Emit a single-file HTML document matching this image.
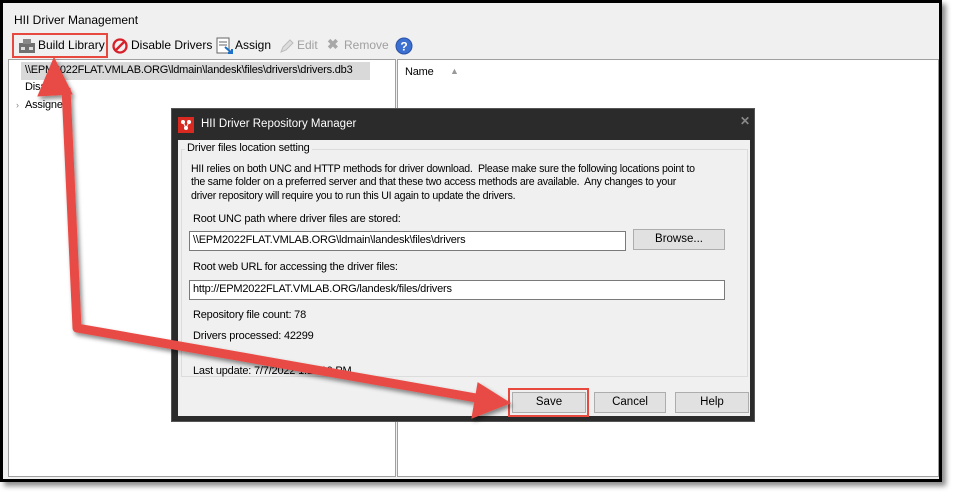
<!DOCTYPE html>
<html><head><style>
*{margin:0;padding:0;box-sizing:border-box}
body{width:955px;height:494px;background:#fff;position:relative;overflow:hidden;font-family:"Liberation Sans",sans-serif;font-size:12px;color:#000}
.abs{position:absolute}
.win{left:0;top:0;width:942px;height:482px;border:3px solid #000;background:#f0f0f0;box-shadow:4px 4px 5px rgba(0,0,0,.45)}
.pane{background:#fff;border:1px solid #a0a0a0}
.btn{background:#e1e1e1;border:1px solid #adadad;text-align:center;font-size:11.5px;line-height:18px}
.inp{background:#fff;border:1px solid #7a7a7a;font-size:11px;padding-left:3px;line-height:17px;white-space:nowrap;letter-spacing:-.2px}
.t{white-space:nowrap}
.d{font-size:11px;letter-spacing:-.2px}
</style></head><body>
<div class="abs win"></div>
<div class="abs t" style="left:14px;top:13px;font-size:12px">HII Driver Management</div>
<div class="abs" style="left:12px;top:33px;width:96px;height:25px;border:2px solid #e8493e"></div>
<svg class="abs" style="left:18px;top:38px" width="18" height="16" viewBox="0 0 18 16"><rect x="1" y="5" width="16" height="10" fill="#707070"/><rect x="5" y="1" width="8" height="5" fill="#888"/><rect x="3" y="9" width="4" height="3" fill="#ddd"/><rect x="11" y="9" width="4" height="3" fill="#ddd"/></svg>
<div class="abs t" style="left:38px;top:38px;font-size:12px">Build Library</div>
<svg class="abs" style="left:112px;top:38px" width="16" height="16"><circle cx="8" cy="8" r="6.5" fill="none" stroke="#d8202a" stroke-width="2.3"/><line x1="3.5" y1="12.5" x2="12.5" y2="3.5" stroke="#d8202a" stroke-width="2.3"/></svg>
<div class="abs t" style="left:131px;top:38px;font-size:12px">Disable Drivers</div>
<svg class="abs" style="left:216px;top:37px" width="18" height="18"><rect x="1" y="1" width="12" height="15" fill="#fff" stroke="#666"/><line x1="3" y1="5" x2="11" y2="5" stroke="#666"/><line x1="3" y1="8" x2="11" y2="8" stroke="#666"/><path d="M9 10 L16 16 M12 16 H16 V12" stroke="#1e6fc8" stroke-width="2" fill="none"/></svg>
<div class="abs t" style="left:235px;top:38px;font-size:12px">Assign</div>
<svg class="abs" style="left:279px;top:38px" width="16" height="16"><path d="M2 14 L4 9 L11 2 L14 5 L7 12 Z" fill="#ddd" stroke="#bbb"/></svg>
<div class="abs t" style="left:297px;top:38px;font-size:12px;color:#a0a0a0">Edit</div>
<div class="abs t" style="left:327px;top:36px;font-size:14px;color:#a8a8a8;font-weight:bold">✖</div>
<div class="abs t" style="left:344px;top:38px;font-size:12px;color:#a0a0a0">Remove</div>
<svg class="abs" style="left:395px;top:37px" width="18" height="18"><circle cx="9" cy="9" r="8" fill="#3b6fd0" stroke="#2a52a8"/><text x="9" y="13.5" font-size="12" font-weight="bold" fill="#fff" text-anchor="middle" font-family="Liberation Sans">?</text></svg>
<div class="abs pane" style="left:8px;top:59px;width:388px;height:418px"></div>
<div class="abs pane" style="left:397px;top:59px;width:542px;height:418px"></div>
<div class="abs" style="left:21px;top:62px;width:349px;height:18px;background:#d9d9d9"></div>
<div class="abs t d" style="left:25px;top:64px">\\EPM2022FLAT.VMLAB.ORG\ldmain\landesk\files\drivers\drivers.db3</div>
<div class="abs t d" style="left:25px;top:81px">Disabled</div>
<div class="abs t" style="left:16px;top:100px;font-size:9px;color:#888">›</div>
<div class="abs t d" style="left:25px;top:99px">Assigned</div>
<div class="abs t d" style="left:405px;top:66px">Name</div>
<div class="abs t" style="left:450px;top:66px;font-size:9px;color:#999">▲</div>
<div class="abs" style="left:171px;top:108px;width:584px;height:314px;background:#2b2b2b;border:1px solid #555"></div>
<div class="abs" style="left:178px;top:117px;width:16px;height:16px;background:#d82a20"></div>
<svg class="abs" style="left:178px;top:117px" width="16" height="16"><circle cx="5" cy="5" r="2" fill="#fff"/><circle cx="11" cy="5" r="2" fill="#fff"/><circle cx="8" cy="11" r="2" fill="#fff"/><path d="M5 5 L8 11 L11 5" stroke="#fff" fill="none"/></svg>
<div class="abs t" style="left:201px;top:118px;font-size:11.5px;color:#fff">HII Driver Repository Manager</div>
<div class="abs t" style="left:740px;top:114px;font-size:12px;color:#888;font-weight:bold">✕</div>
<div class="abs" style="left:178px;top:140px;width:572px;height:276px;background:#f0f0f0"></div>
<div class="abs" style="left:181px;top:149px;width:567px;height:228px;border:1px solid #dcdcdc"></div>
<div class="abs t d" style="left:185px;top:142px;background:#f0f0f0;padding:0 2px">Driver files location setting</div>
<div class="abs d" style="left:191px;top:163px;width:560px;line-height:13.3px;font-size:10.6px;letter-spacing:-.25px">HII relies on both UNC and HTTP methods for driver download.&nbsp; Please make sure the following locations point to<br>the same folder on a preferred server and that these two access methods are available.&nbsp; Any changes to your<br>driver repository will require you to run this UI again to update the drivers.</div>
<div class="abs t d" style="left:193px;top:213px">Root UNC path where driver files are stored:</div>
<div class="abs inp" style="left:189px;top:231px;width:437px;height:20px">\\EPM2022FLAT.VMLAB.ORG\ldmain\landesk\files\drivers</div>
<div class="abs btn" style="left:633px;top:229px;width:92px;height:21px">Browse...</div>
<div class="abs t d" style="left:193px;top:261px">Root web URL for accessing the driver files:</div>
<div class="abs inp" style="left:189px;top:280px;width:536px;height:20px">http://EPM2022FLAT.VMLAB.ORG/landesk/files/drivers</div>
<div class="abs t d" style="left:193px;top:309px">Repository file count: 78</div>
<div class="abs t d" style="left:193px;top:330px">Drivers processed: 42299</div>
<div class="abs t d" style="left:193px;top:365px">Last update: 7/7/2022 1:11:10 PM</div>
<div class="abs btn" style="left:512px;top:392px;width:74px;height:21px">Save</div>
<div class="abs" style="left:508px;top:388px;width:81px;height:29px;border:2px solid #e8493e"></div>
<div class="abs btn" style="left:594px;top:392px;width:72px;height:21px">Cancel</div>
<div class="abs btn" style="left:675px;top:392px;width:74px;height:21px">Help</div>
<svg class="abs" style="left:0;top:0" width="955" height="494">
<defs><filter id="sh" x="-10%" y="-10%" width="130%" height="130%"><feDropShadow dx="2" dy="3" stdDeviation="2" flood-opacity=".45"/></filter></defs>
<g filter="url(#sh)" fill="#e84c45" stroke="#e84c45">
<polyline points="66,88 77,328 482,399" fill="none" stroke-width="9" stroke-linejoin="round"/>
<polygon points="54,58 38,96 72,94" stroke-width="1"/>
<polygon points="510,403 478,383 472,418" stroke-width="1"/>
</g>
</svg>
</body></html>
